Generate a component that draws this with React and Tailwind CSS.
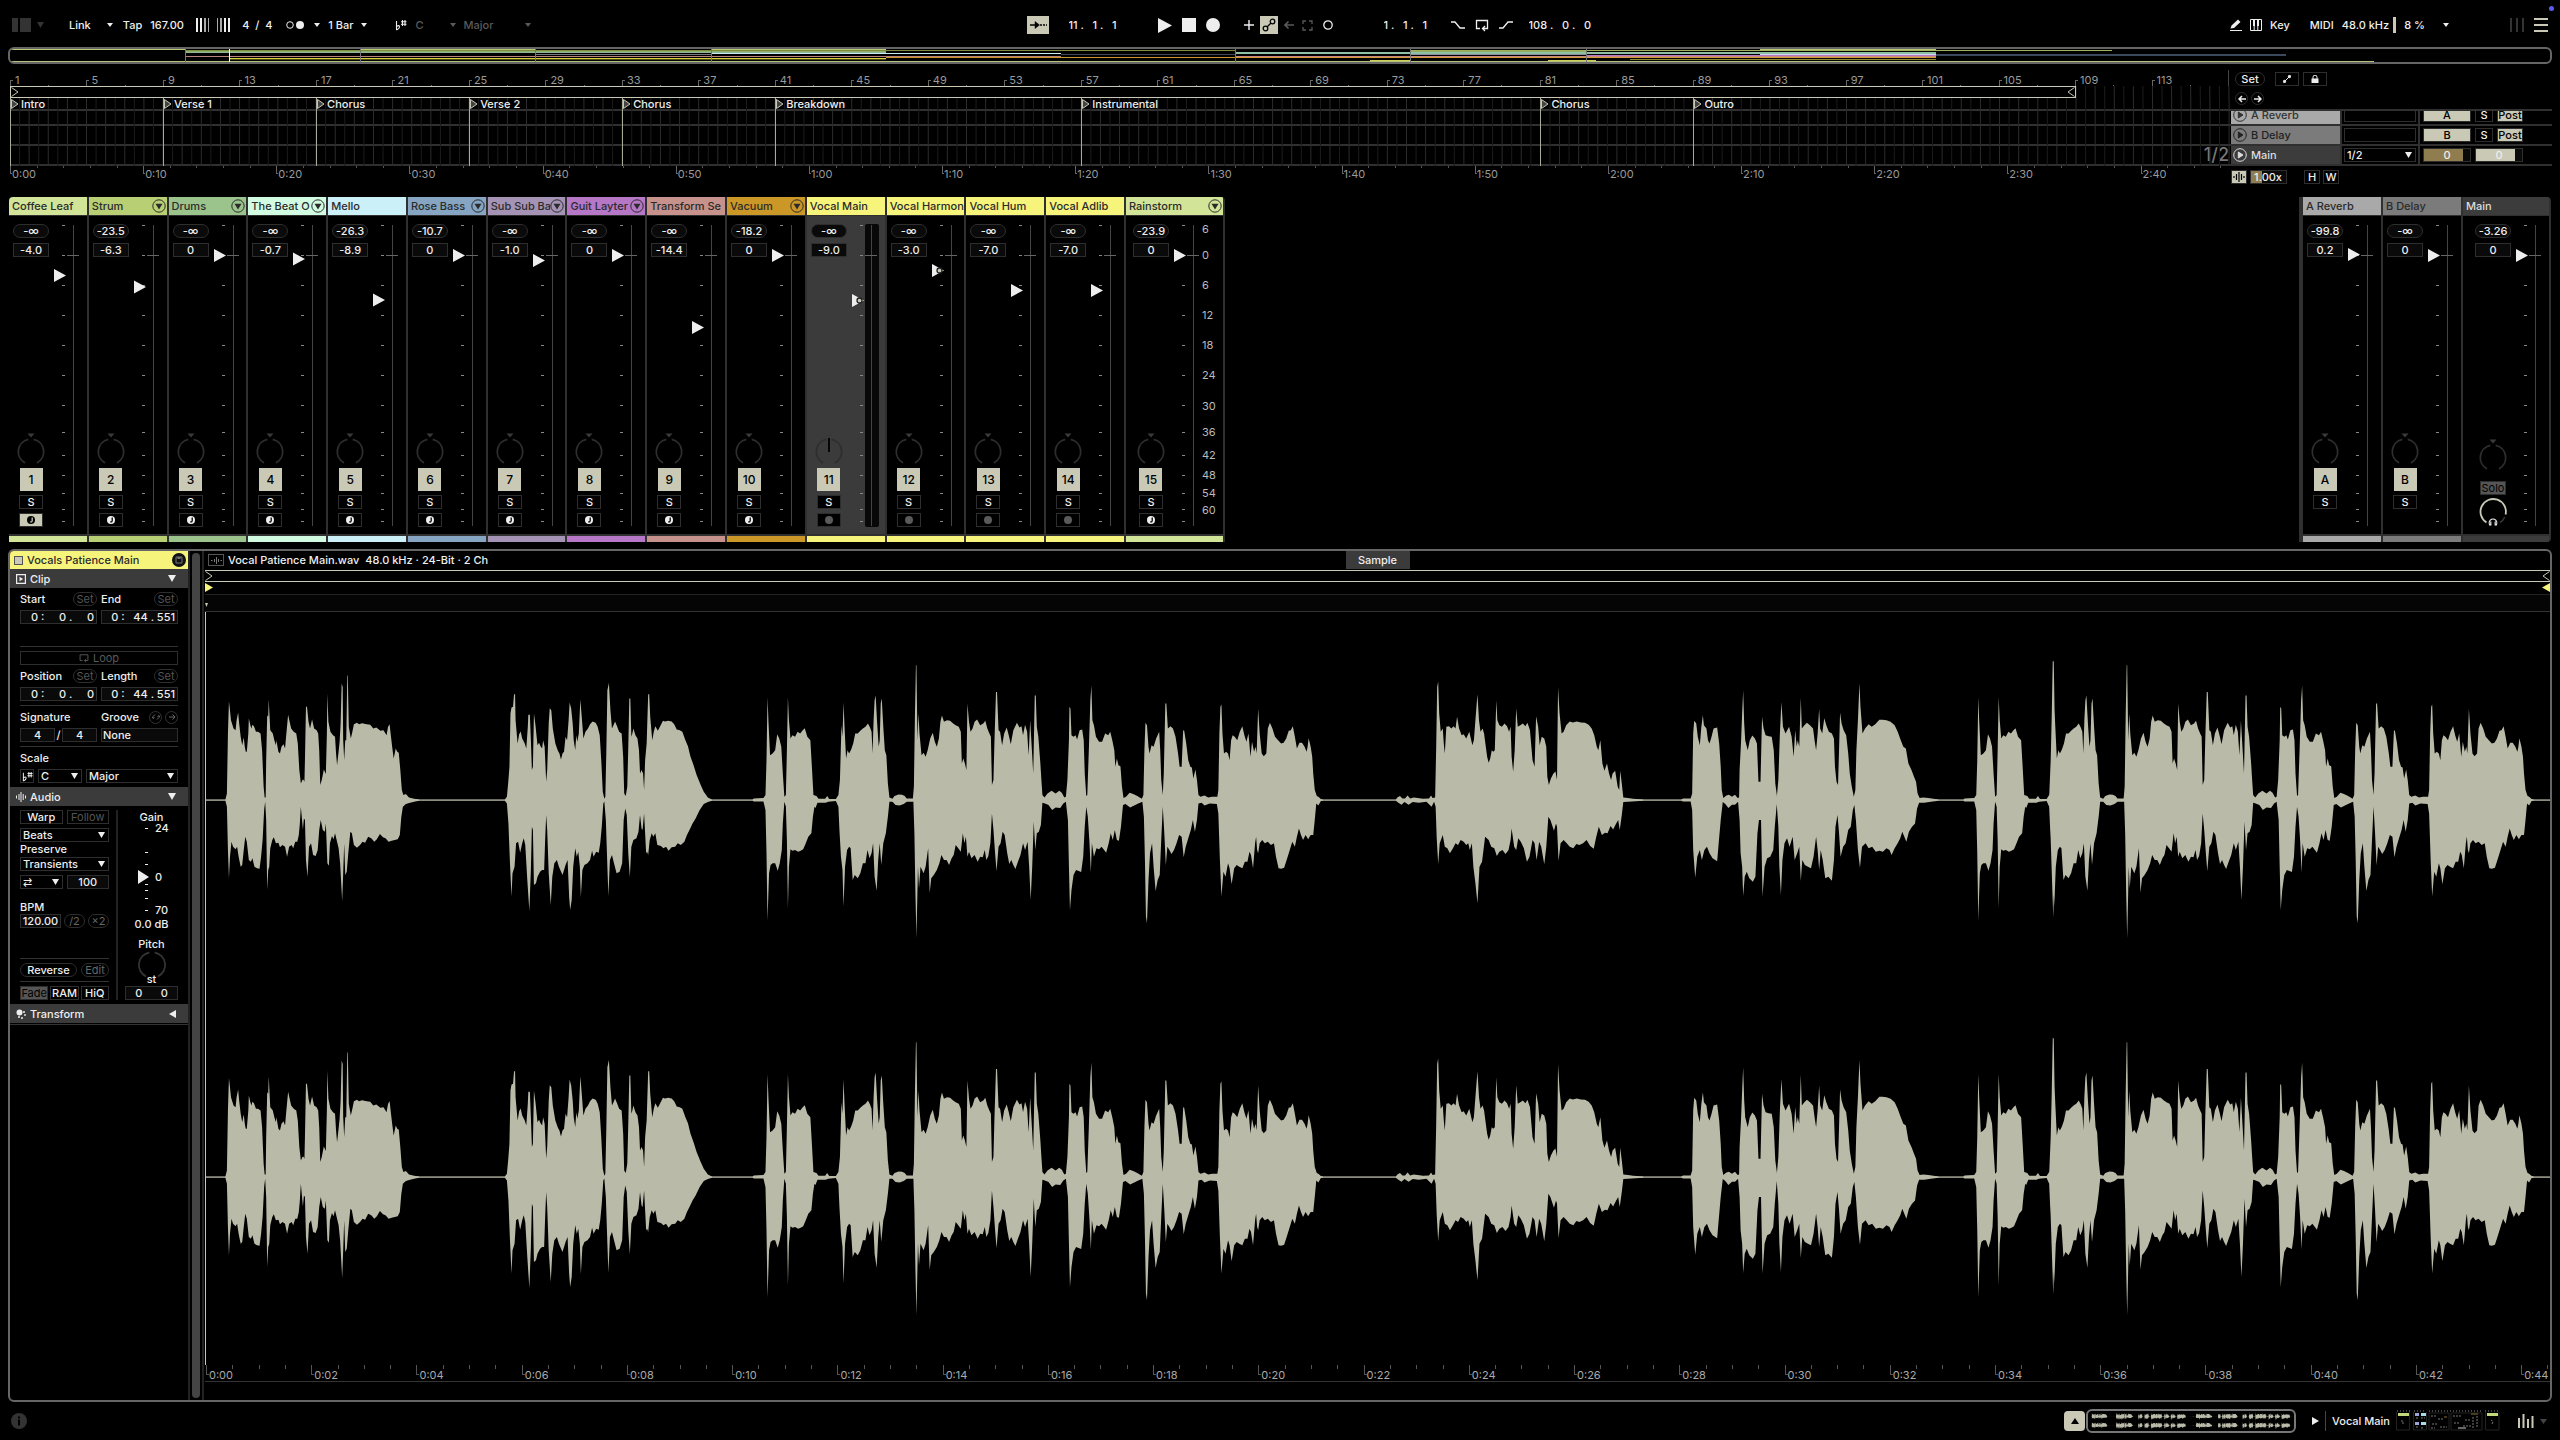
import { useId } from 'react'
import clsx from 'clsx'

const BARS = 116.1
const SECONDS = 166.8
const CLIP_SECONDS = 44.551

const BAR_MARKS = Array.from({ length: 29 }, (_, i) => 1 + i * 4)
const TIME_MARKS = Array.from({ length: 17 }, (_, i) => i * 10)
const CLIP_MARKS = Array.from({ length: 23 }, (_, i) => i * 2)

const LOCATORS = [
  { name: 'Intro', bar: 1 },
  { name: 'Verse 1', bar: 9 },
  { name: 'Chorus', bar: 17 },
  { name: 'Verse 2', bar: 25 },
  { name: 'Chorus', bar: 33 },
  { name: 'Breakdown', bar: 41 },
  { name: 'Instrumental', bar: 57 },
  { name: 'Chorus', bar: 81 },
  { name: 'Outro', bar: 89 },
]

const TRACKS = [
  { name: 'Coffee Leaf', color: 'bg-[#d2e498]', peak: '-∞', vol: '-4.0', midi: true, armed: true },
  { name: 'Strum', color: 'bg-[#b9cf74]', peak: '-23.5', vol: '-6.3', midi: true, group: true },
  { name: 'Drums', color: 'bg-[#9bc48d]', peak: '-∞', vol: '0', midi: true, group: true },
  { name: 'The Beat O', color: 'bg-[#d2fce1]', peak: '-∞', vol: '-0.7', midi: true, group: true },
  { name: 'Mello', color: 'bg-[#cbf0f8]', peak: '-26.3', vol: '-8.9', midi: true },
  { name: 'Rose Bass', color: 'bg-[#85a5c3]', peak: '-10.7', vol: '0', midi: true, group: true },
  { name: 'Sub Sub Ba', color: 'bg-[#a593b5]', peak: '-∞', vol: '-1.0', midi: true, group: true },
  { name: 'Guit Layter', color: 'bg-[#b677c6]', peak: '-∞', vol: '0', midi: true, group: true },
  { name: 'Transform Se', color: 'bg-[#c6928b]', peak: '-∞', vol: '-14.4', midi: true },
  { name: 'Vacuum', color: 'bg-[#cb9827]', peak: '-18.2', vol: '0', midi: true, group: true },
  { name: 'Vocal Main', color: 'bg-[#f7f47c]', peak: '-∞', vol: '-9.0', selected: true, automated: true },
  { name: 'Vocal Harmon', color: 'bg-[#f7f47c]', peak: '-∞', vol: '-3.0', automated: true },
  { name: 'Vocal Hum', color: 'bg-[#f7f47c]', peak: '-∞', vol: '-7.0' },
  { name: 'Vocal Adlib', color: 'bg-[#f7f47c]', peak: '-∞', vol: '-7.0' },
  { name: 'Rainstorm', color: 'bg-[#d2e498]', peak: '-23.9', vol: '0', midi: true, group: true, scale: true },
]

// y of every mark on the fader, from the top of the meter
const FADER_MARKS = [1, 31, 61, 91, 121, 151, 181, 208, 231, 251, 269, 285, 297]
const SCALE = [['6', 'mt-0'], ['0', 'mt-[14px]'], ['6', 'mt-[18px]'], ['12', 'mt-[18px]'], ['18', 'mt-[18px]'], ['24', 'mt-[18px]'], ['30', 'mt-[19px]'], ['36', 'mt-[14px]'], ['42', 'mt-[11px]'], ['48', 'mt-[8px]'], ['54', 'mt-[6px]'], ['60', 'mt-[5px]']]

// x,level pairs; x counts from `at`
const PHRASE = {
  top: '1122,2 1124,5 1143,6 1147,15 1149,120 1151,310 1153,230 1156,135 1161,140 1166,150 1170,198 1174,185 1178,160 1181,80 1184,10 1187,15 1189,150 1191,310 1193,240 1196,185 1200,195 1205,190 1210,205 1215,200 1220,210 1224,216 1229,190 1235,180 1238,100 1241,15 1247,12 1251,4 1264,4 1268,12 1272,3 1285,3 1290,15 1293,60 1296,225 1298,190 1300,293 1302,220 1305,125 1308,150 1311,140 1315,152 1319,170 1323,200 1328,200 1333,208 1338,215 1343,220 1348,230 1352,218 1355,205 1357,140 1359,240 1361,300 1363,314 1366,230 1369,160 1371,180 1373,290 1375,305 1378,220 1381,150 1384,135 1387,50 1390,8 1396,4 1400,12 1408,17 1415,16 1420,12 1424,5 1436,5 1438,40 1440,250 1442,405 1443,405 1445,180 1447,260 1449,200 1453,135 1457,142 1461,130 1465,150 1470,185 1475,202 1479,175 1483,160 1487,185 1490,235 1493,254 1497,235 1503,240 1509,238 1515,230 1520,225 1526,220 1530,205 1532,110 1535,125 1538,110 1541,90 1543,290 1546,235 1549,205 1553,215 1557,235 1562,242 1568,225',
  bottom: '1122,2 1124,4 1143,4 1147,30 1149,160 1151,362 1154,220 1157,195 1161,190 1166,190 1171,212 1175,190 1179,150 1181,70 1184,5 1187,20 1189,120 1191,325 1193,200 1196,148 1200,152 1205,150 1211,155 1216,152 1221,148 1226,130 1231,110 1237,100 1240,50 1243,20 1245,24 1249,8 1265,8 1270,5 1285,3 1290,20 1292,90 1295,170 1298,210 1300,320 1303,200 1307,150 1311,140 1314,145 1318,240 1322,225 1328,235 1333,220 1338,190 1343,190 1347,150 1351,175 1355,160 1358,130 1361,230 1365,272 1368,180 1371,130 1374,195 1378,130 1383,100 1387,50 1390,5 1396,5 1402,15 1410,16 1418,12 1424,5 1437,5 1439,100 1441,280 1443,415 1446,200 1448,265 1451,200 1457,220 1461,200 1466,145 1469,278 1472,235 1477,225 1483,210 1488,190 1492,165 1497,180 1502,180 1507,195 1512,175 1516,165 1520,135 1525,145 1530,155 1534,100 1537,130 1540,110 1543,170 1546,155 1551,175 1557,165 1563,185 1568,170',
}
const PHRASE_END = {
  top: '0,225 6,230 10,238 14,215 18,200 21,190 23,45 26,60 28,180 31,325 33,325 36,210 39,205 43,165 47,200 52,218 56,195 60,168 65,210 72,232 77,218 81,222 84,195 88,226 92,205 95,135 98,240 101,160 104,80 107,314 109,314 111,220 114,190 118,110 120,60 122,15 126,8 132,20 140,28 148,20 155,28 160,22 165,8 168,10 171,60 174,180 175,280 177,275 179,195 183,190 187,195 190,182 195,210 200,212 203,180 205,80 208,12 210,15 213,150 216,300 218,344 220,240 223,225 227,190 233,175 239,175 245,200 251,195 255,205 259,180 263,150 265,100 268,125 271,105 275,102 278,40 281,6 286,10 293,22 300,18 308,12 317,4 320,15 322,150 324,232 327,225 330,160 332,140 336,165 340,160 345,185 351,205 353,150 355,60 358,15 360,80 363,290 365,290 368,215 373,222 378,215 383,190 388,140 391,100 395,100 398,210 400,208 404,170 408,120 412,100 415,98 418,65 422,92 425,60 428,15 432,10 440,14 447,8 455,10 465,10 467,30 469,200 471,280 473,287 475,200 478,140 482,145 486,140 489,120 492,180 495,195 499,190 504,180 509,205 514,222 518,195 522,175 526,200 530,130 533,175 537,145 540,160 542,140 545,275 548,200 552,140 556,132 561,140 564,215 568,232 573,215 578,190 585,178 590,170 595,172 600,185 605,208 609,210 613,222 617,190 621,155 626,172 631,172 636,160 640,145 642,160 644,186 648,160 651,130 653,80 656,30 660,12 663,10 668,3 672,2',
  bottom: '0,170 5,172 9,150 12,180 16,168 20,130 23,40 26,90 29,155 32,214 36,140 40,130 44,95 48,105 53,160 57,192 61,180 65,195 69,207 74,185 79,165 84,130 88,150 93,125 96,200 99,300 102,200 105,65 108,150 111,100 115,95 119,75 122,8 127,10 134,15 141,30 148,22 157,24 163,10 168,5 172,60 174,200 176,330 179,270 183,225 188,210 193,213 198,216 202,170 205,80 208,20 211,50 214,120 217,218 219,130 223,170 228,145 233,148 238,140 243,150 247,158 252,130 256,100 260,120 264,90 268,120 272,122 276,80 280,15 285,12 294,22 302,16 310,10 318,5 321,50 323,180 325,350 327,370 330,240 333,160 337,130 340,200 344,273 348,240 352,225 355,120 358,20 361,100 364,196 367,140 371,150 375,162 380,150 385,130 390,105 395,110 399,172 403,140 408,115 413,90 417,60 421,95 425,60 428,10 434,8 440,16 450,10 464,12 467,40 470,180 473,290 477,215 481,230 486,190 489,205 493,253 498,205 503,195 508,200 514,205 519,185 524,185 528,155 531,165 535,205 539,130 541,110 543,150 545,160 548,130 553,120 558,130 564,125 570,135 576,130 580,170 585,205 590,206 596,203 602,175 607,150 612,125 617,140 621,110 625,85 629,105 633,120 638,105 643,118 648,105 653,105 656,60 659,10 663,16 668,3 672,2',
}
const WAVE = [
  {
    at: -50,
    top: '88,2 91,20 93,200 95,297 97,270 99,240 104,215 108,210 110,240 113,263 115,230 118,190 121,165 124,188 126,160 128,145 130,145 133,200 134,245 137,225 139,215 141,226 144,222 148,205 152,205 157,200 160,150 163,40 165,8 167,8 168,120 170,255 172,250 173,303 176,210 181,200 184,180 187,165 188,180 192,145 195,140 198,160 202,168 205,155 207,190 211,256 214,235 217,215 222,205 227,200 230,170 233,90 236,50 239,60 241,62 243,55 244,120 246,280 248,280 251,235 254,215 258,242 262,215 267,210 270,200 272,150 274,45 277,60 281,92 283,85 285,78 287,200 288,320 290,235 294,205 299,195 303,190 305,140 307,105 310,145 312,175 314,230 316,350 318,340 319,180 321,120 323,180 325,180 327,374 328,374 330,220 334,185 337,205 340,228 346,232 350,228 356,231 365,228 372,226 378,215 384,218 392,208 398,210 404,195 407,220 410,228 412,200 415,160 418,125 422,155 425,145 428,142 431,90 434,30 437,15 442,18 448,8 458,4 468,2',
    bottom: '88,2 91,20 93,150 95,235 97,170 100,125 103,140 108,148 111,140 114,170 118,200 121,195 124,150 127,110 130,125 134,180 138,185 141,175 145,200 150,205 155,206 158,170 161,120 164,30 166,5 168,60 170,270 172,210 174,200 176,145 180,120 183,112 187,130 192,128 195,142 200,135 205,140 209,170 213,140 218,135 221,145 225,125 229,125 232,105 234,70 236,20 240,88 242,55 244,60 246,180 249,230 252,140 256,130 260,165 265,168 269,150 272,90 275,60 279,90 283,95 285,70 288,190 291,197 293,130 297,108 300,118 303,100 307,125 310,145 313,190 317,303 319,220 321,130 323,225 326,215 329,160 333,95 336,100 340,135 346,143 352,135 357,125 362,128 368,110 374,115 380,125 385,118 391,102 397,112 402,115 408,125 414,122 420,120 426,118 430,105 433,50 436,20 442,12 450,8 460,4 468,2',
  },
  {
    at: -50,
    top: '636,2 640,10 643,60 645,100 647,260 649,278 652,280 654,318 656,318 657,240 661,170 664,198 667,206 670,185 675,170 678,155 681,220 682,256 685,256 687,180 689,90 691,100 693,260 696,225 700,165 703,172 706,162 709,155 711,180 714,160 717,55 719,90 722,230 724,276 727,270 730,215 735,170 740,148 743,140 746,122 749,140 752,145 755,190 758,180 761,240 763,293 766,275 769,230 771,180 774,150 776,195 778,175 781,200 784,303 787,245 790,185 794,205 799,215 803,228 808,236 814,232 818,220 822,195 825,120 828,25 831,4 833,10 835,150 837,330 840,352 843,270 846,215 849,225 852,236 856,222 860,205 865,200 868,130 870,20 873,12 876,40 878,160 880,305 882,305 884,190 886,200 888,215 892,195 896,185 899,150 901,80 904,90 907,80 909,30 911,120 914,170 917,318 919,318 921,250 925,180 928,205 931,222 936,208 940,220 946,238 950,236 956,238 963,236 968,228 973,212 979,210 984,205 990,180 995,162 1000,130 1006,105 1012,75 1020,45 1026,25 1034,8 1042,2',
    bottom: '636,2 640,10 643,70 646,190 649,290 651,220 655,200 658,130 662,125 666,158 670,130 673,115 676,135 680,240 684,333 687,210 689,80 691,90 693,255 697,250 700,230 705,215 709,210 713,210 715,120 717,45 719,90 722,220 726,315 729,230 733,190 738,180 742,200 749,225 755,195 759,180 762,290 764,330 767,300 770,200 774,145 777,170 780,155 783,200 785,292 788,210 792,195 798,190 803,180 807,152 810,170 815,155 820,158 823,130 826,80 829,10 831,4 834,60 837,200 839,288 842,180 846,165 850,190 855,220 861,215 866,190 869,60 872,25 875,45 878,160 881,232 884,140 888,120 894,115 898,95 901,45 904,85 906,90 909,40 911,100 913,160 915,155 917,165 920,120 924,100 927,110 931,100 935,135 942,138 947,145 952,140 957,152 963,142 970,140 975,130 981,135 988,125 993,105 998,90 1004,70 1010,55 1018,30 1026,12 1034,6 1042,2',
  },
  { at: -50, ...PHRASE },
  { at: 1518, ...PHRASE_END },
  {
    at: 1518,
    top: '815,2 818,8 823,12 828,5 833,5 838,14 843,5 850,8 858,6 868,4 880,5 884,14 887,6 892,8 894,150 896,340 898,356 900,260 903,205 907,215 909,170 911,140 914,220 919,222 924,215 928,222 932,215 935,250 939,215 944,195 948,198 953,185 959,205 962,185 965,165 968,180 971,240 975,318 978,240 981,205 985,215 988,200 991,165 994,130 997,112 1000,125 1003,150 1006,145 1009,150 1012,300 1014,240 1018,225 1023,220 1028,230 1033,222 1037,205 1040,220 1042,130 1045,85 1048,150 1051,276 1054,220 1059,225 1064,230 1069,222 1073,232 1078,210 1083,120 1087,100 1090,252 1094,220 1097,165 1101,190 1106,185 1110,160 1112,70 1115,45 1119,65 1124,80 1128,86 1131,60 1133,340 1136,260 1140,200 1144,205 1149,225 1156,236 1162,233 1170,236 1178,233 1186,232 1193,226 1199,215 1204,195 1209,160 1212,150 1216,180 1220,110 1224,88 1229,110 1233,80 1237,60 1240,80 1245,88 1250,40 1253,30 1255,88 1258,50 1261,8 1270,6 1280,4 1300,2',
    bottom: '815,2 820,8 826,14 832,6 840,14 848,6 860,8 875,5 885,20 890,5 893,20 895,110 898,193 901,130 907,105 911,140 916,145 921,160 927,145 932,130 937,135 942,120 948,125 953,135 957,130 960,150 964,130 967,200 971,250 975,310 979,200 984,185 990,110 997,120 1002,140 1008,145 1013,168 1018,155 1024,150 1030,162 1036,150 1040,120 1042,85 1047,140 1051,150 1055,115 1060,125 1066,145 1072,185 1077,170 1083,120 1087,130 1091,180 1096,125 1100,140 1106,193 1110,140 1114,50 1118,60 1125,92 1129,70 1131,80 1134,183 1138,130 1144,120 1150,130 1156,140 1163,145 1169,132 1175,135 1182,130 1189,120 1196,138 1203,146 1208,110 1213,80 1219,105 1225,98 1230,100 1236,78 1241,88 1247,70 1251,60 1254,90 1258,45 1261,6 1270,5 1300,2',
  },
  {
    at: 1518,
    top: '1375,2 1378,5 1393,5 1396,20 1398,200 1400,238 1404,230 1407,190 1411,165 1414,220 1417,255 1419,225 1424,215 1427,180 1430,170 1434,190 1438,215 1445,218 1449,170 1452,100 1454,30 1457,6 1463,14 1468,16 1474,10 1480,16 1485,6 1488,8 1489,90 1492,180 1494,260 1496,330 1498,230 1500,180 1505,150 1509,180 1514,194 1519,185 1523,170 1526,55 1530,55 1533,250 1536,215 1540,195 1546,192 1552,190 1556,150 1559,50 1562,15',
    bottom: '1375,2 1378,4 1393,4 1396,30 1398,150 1402,233 1406,170 1411,150 1415,180 1420,150 1425,140 1430,160 1436,175 1445,184 1448,130 1452,60 1456,6 1461,12 1467,24 1474,14 1480,14 1486,5 1489,60 1491,160 1494,200 1496,288 1499,230 1503,215 1508,235 1515,245 1520,230 1524,100 1527,60 1531,60 1534,290 1538,200 1543,175 1549,170 1555,150 1558,80 1562,10',
  },
  {
    at: 3047,
    top: '33,10 36,60 39,200 42,295 45,220 50,200 57,220 62,190 66,130 69,210 72,160 74,180 77,160 80,308 82,215 87,225 92,232 98,225 104,215 107,180 110,150 113,200 116,275 118,215 122,200 126,246 130,225 135,205 141,200 145,185 147,100 150,55 153,45 155,150 157,263 160,230 164,210 169,195 173,140 176,80 180,40 184,10 187,30 189,150 192,240 195,352 197,280 201,200 206,215 213,228 219,220 226,228 234,241 240,241 248,240 256,235 264,225 270,205 276,180 281,160 286,155 291,110 297,90 302,70 306,55 309,20 313,6 320,8 330,6 340,4 350,2',
    bottom: '33,15 36,80 38,200 41,285 44,180 48,130 53,115 58,140 64,110 68,180 73,160 77,140 80,243 83,180 88,195 94,200 100,205 105,170 110,110 113,150 116,210 119,150 123,180 128,235 134,230 141,242 145,180 148,80 152,45 155,100 158,170 163,140 168,130 173,90 178,80 182,30 185,15 188,60 192,150 196,203 200,140 207,130 213,145 220,140 227,155 234,152 241,155 248,145 254,150 258,165 264,145 270,130 275,115 279,95 283,110 287,125 292,95 298,80 304,70 308,25 312,8 322,8 335,5 350,2',
  },
  { at: 2324, ...PHRASE },
  { at: 3047, top: '567,10 570,120 572,250 574,417 576,417 578,230 582,125', bottom: '567,10 570,120 575,353 578,200 582,125' },
  { at: 3892, ...PHRASE_END },
]

const outline = ({ at, top, bottom }) => {
  const pts = (s, sign) => s.split(' ').map((p) => p.split(',').map(Number)).map(([x, v]) => `${x + at},${v * sign}`)
  return `M${pts(top, -1).join('L')}L${pts(bottom, 1).reverse().join('L')}Z`
}
const WAVE_PATH = WAVE.map(outline).join('')

// x, y, width, colour of each stripe in the arrangement overview
const OVERVIEW = [
  [0, 0, 175, '#b9cb72'], [350, 0, 175, '#b9cb72'], [701, 0, 175, '#b9cb72'], [1750, 0, 176, '#b9cb72'],
  [175, 1, 1050, '#7f8c3c'], [1400, 1, 702, '#9fb055'],
  [175, 2, 701, '#8fae6a'], [1400, 2, 176, '#8fae6a'],
  [175, 3, 701, '#8fb59a'], [1225, 3, 701, '#8fc0a6'], [1225, 4, 701, '#8fc0a6'], [701, 4, 350, '#c8ecf2'],
  [525, 5, 176, '#77777f'], [1051, 5, 174, '#3a4a5c'], [1400, 5, 176, '#8d8da0'], [1750, 5, 176, '#cbd8ee'], [1926, 5, 350, '#3a4a5c'],
  [1576, 6, 350, '#b677c6'], [1926, 6, 350, '#3a4a5c'],
  [175, 7, 876, '#b8847c'], [1225, 7, 701, '#c98a84'], [1225, 8, 701, '#d39a3a'],
  [876, 8, 349, '#cb9827'], [220, 9, 656, '#d5d33c'], [220, 10, 656, '#4c4a12'],
  [1360, 11, 40, '#cfcd56'], [1538, 11, 48, '#cfcd56'], [1620, 10, 306, '#8f8d3a'],
  [0, 12, 2364, '#b4c37a'],
]

function Tri({ dir = 'down', className = 'size-2' }) {
  const d = { down: 'M0 0H8L4 8Z', up: 'M4 0L8 8H0Z', left: 'M8 0V8L0 4Z', right: 'M0 0L8 4L0 8Z' }[dir]
  return (
    <svg viewBox="0 0 8 8" preserveAspectRatio="none" className={clsx('shrink-0 fill-current', className)}>
      <path d={d} />
    </svg>
  )
}

function Waveform({ view = '0 -565 4596 1131' }) {
  return (
    <span className="relative min-h-0 flex-1">
      <svg viewBox={view} preserveAspectRatio="none" className="absolute inset-0 size-full fill-[#babaa8]">
        <path d={WAVE_PATH} />
        <rect x="0" y="-2" width="4596" height="4" />
      </svg>
    </span>
  )
}

function Box({ tone = 'bg-black', className, children, ...rest }) {
  return (
    <button className={clsx('flex h-3.5 items-center justify-center border border-[#2e2e2e] leading-none', tone, className)} {...rest}>
      {children}
    </button>
  )
}

function Pill({ className, children }) {
  return (
    <button className={clsx('flex h-3.5 items-center justify-center rounded-full border border-[#2e2e2e] px-1 leading-none', className)}>{children}</button>
  )
}

function Field({ label, value, className, id }) {
  return (
    <input
      id={id}
      aria-label={id ? undefined : label}
      defaultValue={value}
      className={clsx('h-3.5 min-w-0 border border-[#2e2e2e] bg-[#0a0a0a] leading-none outline-none', className)}
    />
  )
}

function Dropdown({ label, value, className, id }) {
  return (
    <span className={clsx('relative flex', className)}>
      <select id={id} aria-label={id ? undefined : label} className="h-3.5 w-full appearance-none border border-[#2e2e2e] bg-black pl-0.5 leading-none outline-none">
        <option>{value}</option>
      </select>
      <Tri className="pointer-events-none absolute top-1 right-1 h-1.5 w-[7px]" />
    </span>
  )
}

function ScaleGlyph({ className }) {
  return (
    <svg viewBox="0 0 12 12" className={clsx('size-3 shrink-0 fill-none stroke-current', className)}>
      <path d="M1.5 2V11M1.5 7.5Q4.5 5.5 4.5 8Q4.5 9.5 1.5 11M7.5 1V7M10 1V7M6 2.8H11.5M6 5.2H11.5" strokeWidth="1.1" />
    </svg>
  )
}

function LoopGlyph({ className }) {
  return (
    <svg viewBox="0 0 14 14" className={clsx('shrink-0 fill-none stroke-current', className)}>
      <path d="M5 10.5H1.5V2.5H12.5V10.5H8M10 8L7.5 10.5L10 13" strokeWidth="1.3" />
    </svg>
  )
}

function TopBar() {
  return (
    <header className="flex h-[47px] items-center pt-[3px]">
      <div className="flex flex-1 items-center">
        <button aria-label="Browser" className="ml-1 flex gap-0.5">
          <span className="h-3.5 w-1.5 bg-[#333]" />
          <span className="h-3.5 w-[11px] bg-[#333]" />
        </button>
        <Tri className="ml-1.5 h-1.5 w-[7px] text-[#333]" />
        <button className="ml-[25px]">Link</button>
        <Tri className="ml-4 h-1 w-1.5" />
        <button className="ml-2.5">Tap</button>
        <input aria-label="Tempo" defaultValue="167.00" className="ml-2 w-10 outline-none" />
        <button aria-label="Nudge down" className="ml-1.5 flex gap-0.5">
          <span className="h-3.5 w-0.5 bg-[#eee]" />
          <span className="h-3.5 w-0.5 bg-[#eee]" />
          <span className="h-3.5 w-0.5 bg-[#aaa]" />
          <span className="h-3.5 w-px bg-[#aaa]" />
        </button>
        <button aria-label="Nudge up" className="ml-2 flex gap-0.5">
          <span className="h-3.5 w-px bg-[#aaa]" />
          <span className="h-3.5 w-0.5 bg-[#aaa]" />
          <span className="h-3.5 w-0.5 bg-[#eee]" />
          <span className="h-3.5 w-0.5 bg-[#eee]" />
        </button>
        <input aria-label="Time signature" defaultValue="4  /  4" className="ml-3 w-9 outline-none" />
        <svg viewBox="0 0 18 8" className="ml-2 h-2 w-[18px]">
          <circle cx="4" cy="4" r="3.3" className="fill-none stroke-[#eee]" />
          <circle cx="14" cy="4" r="4" className="fill-[#eee]" />
        </svg>
        <Tri className="ml-2.5 h-1 w-1.5" />
        <button className="ml-2">1 Bar</button>
        <Tri className="ml-2 h-1 w-1.5" />
        <ScaleGlyph className="ml-7" />
        <button className="ml-2 text-[#5a5a5a]">C</button>
        <Tri className="ml-[26px] h-1 w-1.5 text-[#5a5a5a]" />
        <button className="ml-2 text-[#5a5a5a]">Major</button>
        <Tri className="ml-8 h-1 w-1.5 text-[#5a5a5a]" />
      </div>

      <div className="flex shrink-0 items-center pl-[69px]">
        <button aria-label="Follow" className="flex h-[18px] w-[22px] items-center justify-center bg-[#c9c9b6]">
          <svg viewBox="0 0 18 8" className="h-2 w-[18px] stroke-black">
            <path d="M1 4H7" strokeWidth="1.5" />
            <path d="M6 0.5L10.5 4L6 7.5Z" className="fill-black" strokeWidth="0.5" />
            <path d="M11 4H18" strokeDasharray="2 1" strokeWidth="1.5" />
          </svg>
        </button>
        <input aria-label="Position" defaultValue="11 .   1 .   1" className="ml-5 w-[73px] outline-none" />
        <button aria-label="Play" className="ml-4"><Tri dir="right" className="h-[15px] w-3.5" /></button>
        <button aria-label="Stop" className="ml-2.5 size-3.5 bg-[#eee]" />
        <button aria-label="Record" className="ml-2.5 size-3.5 rounded-full bg-[#eee]" />
        <svg viewBox="0 0 10 10" className="ml-6 size-2.5 stroke-[#eee]"><path d="M5 0V10M0 5H10" strokeWidth="1.4" /></svg>
        <button aria-label="Automation arm" className="ml-1.5 flex h-[18px] w-[18px] items-center justify-center bg-[#c9c9b6]">
          <svg viewBox="0 0 14 14" className="size-3.5 fill-none stroke-black" strokeWidth="1.3">
            <circle cx="3.5" cy="10.5" r="2.3" />
            <circle cx="10.5" cy="3.5" r="2.3" />
            <path d="M5 9L9 5" />
          </svg>
        </button>
        <svg viewBox="0 0 10 10" className="ml-1.5 size-2.5 fill-none stroke-[#5a5a5a]"><path d="M10 5H1.5M4.5 1.5L1 5L4.5 8.5" strokeWidth="1.6" /></svg>
        <svg viewBox="0 0 11 11" className="ml-2 size-[11px] fill-none stroke-[#5a5a5a]"><path d="M1 4V1H4M7 1H10V4M10 7V10H7M4 10H1V7" strokeWidth="1.3" /></svg>
        <svg viewBox="0 0 10 10" className="ml-2.5 size-2.5 fill-none stroke-[#eee]"><circle cx="5" cy="5" r="4.2" strokeWidth="1.3" /></svg>
        <input aria-label="Loop start" defaultValue="1 .   1 .   1" className="ml-[51px] w-[61px] outline-none" />
        <svg viewBox="0 0 14 8" className="ml-1.5 h-2 w-3.5 fill-none stroke-[#eee]"><path d="M0 1H4L9 7H14" strokeWidth="1.3" /></svg>
        <button aria-label="Loop" className="ml-2.5"><LoopGlyph className="size-3.5" /></button>
        <svg viewBox="0 0 14 8" className="ml-2.5 h-2 w-3.5 fill-none stroke-[#eee]"><path d="M0 7H4L9 1H14" strokeWidth="1.3" /></svg>
        <input aria-label="Loop length" defaultValue="108 .   0 .   0" className="ml-4 w-[74px] outline-none" />
      </div>

      <div className="flex flex-1 items-center justify-end">
        <svg viewBox="0 0 12 12" className="size-3 fill-[#eee]"><path d="M0.5 9.5L1.5 6.5L8 0.5L10.5 3L4 9ZM0 11H12V12H0Z" /></svg>
        <svg viewBox="0 0 12 12" className="ml-2 size-3">
          <path d="M0.5 0.5H11.5V11.5H0.5ZM4.2 6V11.5M7.8 6V11.5" className="fill-none stroke-[#eee]" />
          <path d="M3 0.5H5V7H3ZM7 0.5H9V7H7Z" className="fill-[#eee]" />
        </svg>
        <button className="ml-2">Key</button>
        <span className="ml-5">MIDI</span>
        <span className="ml-2">48.0 kHz</span>
        <span className="ml-1 h-4 w-[3px] bg-[#c9c9b6]" />
        <span className="ml-2">8 %</span>
        <Tri className="ml-[18px] h-1 w-1.5" />
        <div className="ml-[61px] flex gap-1">
          <span className="h-3.5 w-0.5 bg-[#333]" />
          <span className="h-3.5 w-0.5 bg-[#333]" />
          <span className="h-3.5 w-0.5 bg-[#333]" />
        </div>
        <button aria-label="Views" className="mr-1 ml-2.5 flex flex-col gap-1">
          <span className="h-0.5 w-3.5 bg-[#c9c9b6]" />
          <span className="h-0.5 w-3.5 bg-[#c9c9b6]" />
          <span className="h-0.5 w-3.5 bg-[#c9c9b6]" />
        </button>
      </div>
      <span className="absolute top-1.5 right-1.5 size-[5px] rounded-full bg-[#5b5bf0]" />
    </header>
  )
}

function Overview() {
  return (
    <div className="h-[17px] overflow-hidden rounded-md border-2 border-[#666]">
      <svg viewBox="0 0 2540 13" preserveAspectRatio="none" className="block size-full">
        {OVERVIEW.map(([x, y, w, c], i) => (
          <rect key={i} x={x} y={y} width={w} height="1" fill={c} />
        ))}
        {[175, 350, 525, 701, 1225, 1400, 1576].map((x) => (
          <rect key={x} x={x} y="0" width="1" height="13" fill="#777" />
        ))}
        <rect x="219" y="0" width="1" height="13" fill="#fff" />
      </svg>
    </div>
  )
}

function Grid({ from = 0 }) {
  const lines = Array.from({ length: Math.floor((BARS - from) * 2) + 1 }, (_, i) => i)
  return (
    <svg className="absolute inset-0 size-full" preserveAspectRatio="none">
      {lines.map((i) => {
        const x = `${(i / 2 / (BARS - from)) * 100}%`
        return <line key={i} x1={x} x2={x} y1="0" y2="100%" stroke={i % 2 ? '#1c1c1c' : '#2c2c2c'} />
      })}
    </svg>
  )
}

function Timeline() {
  return (
    <div className="min-w-0 flex-1 pl-0.5">
      <div className="flex h-4 overflow-hidden">
        {BAR_MARKS.map((bar) => (
          <div key={bar} className="relative flex min-w-0 basis-0 items-end gap-0.5" style={{ flexGrow: Math.min(4, BARS - bar + 1) }}>
            <span className="h-1.5 w-[3px] shrink-0 border-t border-l border-[#666]" />
            <span className="leading-3 font-normal text-[#9a9a9a]">{bar}</span>
            <span className="absolute bottom-0 left-1/2 h-px w-px bg-[#666]" />
          </div>
        ))}
        <span className="basis-0 border-l border-[#444]" style={{ flexGrow: 0.1 }} />
      </div>

      <div className="flex h-3">
        <div className="flex basis-0 items-center justify-between border border-[#c9c9b6]" style={{ flexGrow: 108 }}>
          <svg viewBox="0 0 8 10" className="h-2.5 w-2 fill-none stroke-[#c9c9b6]"><path d="M0.5 0.5L7 5L0.5 9.5" /></svg>
          <svg viewBox="0 0 8 10" className="h-2.5 w-2 fill-none stroke-[#c9c9b6]"><path d="M7.5 0.5L1 5L7.5 9.5" /></svg>
        </div>
        <div className="relative basis-0" style={{ flexGrow: BARS - 108 }}><Grid from={108} /></div>
      </div>

      <div className="relative">
        <Grid />
        <div className="h-[13px] border-b-2 border-[#303030]" />
        <div className="h-[15px] border-b-2 border-[#303030]" />
        <div className="h-5 border-b-2 border-[#303030]" />
        <div className="flex h-5 items-center justify-end border-b-2 border-[#303030] pr-0.5 text-lg leading-none text-[#777]">1/2</div>
        <div className="absolute inset-0 flex">
          {LOCATORS.map((loc, i) => (
            <div
              key={loc.bar}
              className="min-w-0 basis-0"
              style={{ flexGrow: (LOCATORS[i + 1]?.bar ?? BARS + 1) - loc.bar }}
            >
              <div className="flex h-full items-start gap-0.5 border-l border-[#a9a997]">
                <svg viewBox="0 0 8 10" className="mt-px h-2.5 w-2 fill-[#444] stroke-[#c9c9b6]"><path d="M0.5 0.5L7 5L0.5 9.5Z" /></svg>
                <span className="leading-3">{loc.name}</span>
              </div>
            </div>
          ))}
        </div>
      </div>

      <div className="flex h-[26px]">
        {TIME_MARKS.map((s) => (
          <div key={s} className="relative flex min-w-0 basis-0 items-start" style={{ flexGrow: Math.min(10, SECONDS - s) }}>
            <span className="h-2 w-0.5 shrink-0 border-b border-l border-[#666]" />
            <span className="pt-0.5 leading-3 font-normal text-[#9a9a9a]">
              {Math.floor(s / 60)}:{String(s % 60).padStart(2, '0')}
            </span>
            {[2, 4, 6, 8].filter((m) => s + m < SECONDS).map((m) => (
              <span key={m} className="absolute top-0 h-0.5 w-px bg-[#555]" style={{ left: `${(m / Math.min(10, SECONDS - s)) * 100}%` }} />
            ))}
          </div>
        ))}
      </div>
    </div>
  )
}

function LaneHeader({ name, color, routing, children, height = 'h-5' }) {
  return (
    <div className={clsx('flex items-end overflow-hidden border-b-2 border-[#303030]', height)}>
      <div className={clsx('flex h-[18px] w-[109px] shrink-0 items-center gap-1 pl-0.5', color)}>
        <svg viewBox="0 0 14 14" className="size-3.5 fill-none stroke-current">
          <circle cx="7" cy="7" r="6.3" strokeWidth="1" />
          <path d="M5.3 4L10 7L5.3 10Z" className="fill-current" />
        </svg>
        {name}
      </div>
      <div className="flex h-[18px] w-20 shrink-0 items-center border-x-2 border-[#303030] px-0.5">
        {routing ? <Dropdown label="Main output" value={routing} className="w-full" /> : <Box aria-label={`${name} output`} className="w-full" />}
      </div>
      <div className="flex h-[18px] items-center gap-1 pl-[3px]">{children}</div>
    </div>
  )
}

function LaneHeaders() {
  return (
    <div className="w-[321px] shrink-0">
      <div className="flex h-[41px] flex-col gap-1.5 border-b-2 border-[#303030] pt-0.5 pl-1">
        <div className="flex items-center gap-1">
          <Pill className="mr-1.5 w-[30px]">Set</Pill>
          <Box aria-label="Automation mode" className="w-6">
            <svg viewBox="0 0 8 8" className="size-2 fill-[#eee] stroke-[#eee]"><circle cx="1.5" cy="6.5" r="1.2" /><circle cx="6.5" cy="1.5" r="1.2" /><path d="M1.5 6.5L6.5 1.5" /></svg>
          </Box>
          <Box aria-label="Lock envelopes" className="w-6">
            <svg viewBox="0 0 8 8" className="size-2 fill-[#eee]"><path d="M0.5 3.5H7.5V8H0.5Z" /><path d="M2 4V2.2A2 2 0 0 1 6 2.2V4" className="fill-none stroke-[#eee]" /></svg>
          </Box>
        </div>
        <div className="flex gap-[3px]">
          <button aria-label="Previous locator" className="flex size-[13px] items-center justify-center rounded-full border border-[#2e2e2e]">
            <svg viewBox="0 0 8 8" className="size-2 fill-none stroke-[#eee]"><path d="M8 4H1M4 1L1 4L4 7" strokeWidth="1.5" /></svg>
          </button>
          <button aria-label="Next locator" className="flex size-[13px] items-center justify-center rounded-full border border-[#2e2e2e]">
            <svg viewBox="0 0 8 8" className="size-2 fill-none stroke-[#eee]"><path d="M0 4H7M4 1L7 4L4 7" strokeWidth="1.5" /></svg>
          </button>
        </div>
      </div>
      <LaneHeader name="A Reverb" color="bg-[#a9a9a9] text-[#333]" height="h-[15px]">
        <Box tone="bg-[#c9c9b6] text-black" className="w-12">A</Box>
        <Box className="w-[18px]">S</Box>
        <Box tone="bg-[#c9c9b6] text-black" className="w-[26px]">Post</Box>
      </LaneHeader>
      <LaneHeader name="B Delay" color="bg-[#7b7b7b] text-[#222]">
        <Box tone="bg-[#c9c9b6] text-black" className="w-12">B</Box>
        <Box className="w-[18px]">S</Box>
        <Box tone="bg-[#c9c9b6] text-black" className="w-[26px]">Post</Box>
      </LaneHeader>
      <LaneHeader name="Main" color="bg-[#3c3c3c] text-[#ddd]" routing="1/2">
        <Field label="Main volume" value="0" className="w-12 bg-linear-to-r from-[#8f7d50] from-84% to-[#0a0a0a] to-84% text-center" />
        <Field label="Main pan" value="0" className="w-12 bg-linear-to-r from-[#c9c9b6] from-84% to-[#0a0a0a] to-84% text-center" />
      </LaneHeader>
      <div className="flex h-[26px] items-start gap-[3px] pt-1">
        <Box aria-label="Waveform zoom" tone="bg-[#c9c9b6]" className="w-4">
          <svg viewBox="0 0 12 10" className="h-2.5 w-3 stroke-black"><path d="M1 4V6M3.5 2V8M6 0V10M8.5 2V8M11 4V6" strokeWidth="1.2" /></svg>
        </Box>
        <Field label="Vertical zoom" value="1.00x" className="w-[37px] bg-linear-to-r from-[#8f7d50] from-32% to-[#0a0a0a] to-32% pr-1 text-right" />
        <Box className="ml-3.5 w-4">H</Box>
        <Box className="w-4">W</Box>
      </div>
    </div>
  )
}

function Knob({ label, line, className }) {
  return (
    <span className={clsx('relative flex', className)}>
      <svg viewBox="0 0 30 34" className="h-[34px] w-[30px] fill-none stroke-[#2e2e2e]" strokeWidth="1.8">
        <path d="M12.3 6.3A12.7 12.7 0 0 0 9 29.9M17.7 6.3A12.7 12.7 0 0 1 21 29.9" />
        <path d="M11.5 0.5H18.5L15 4.5Z" stroke="none" className="fill-[#3a3a3a]" />
        {line && <path d="M15 5V19" stroke="#000" />}
      </svg>
      <input type="range" aria-label={label} className="absolute inset-0 size-full opacity-0" />
    </span>
  )
}

function Fader({ track }) {
  const y = 31 - parseFloat(track.vol) * 5
  return (
    <span className="relative mt-2 ml-1 flex h-[303px] w-7 shrink-0">
      <svg viewBox="0 0 28 303" className="h-[303px] w-7">
        {track.selected && <rect x="14" y="0" width="14" height="303" rx="2" fill="#080808" />}
        {FADER_MARKS.map((m) => (
          <rect key={m} x="9" y={m} width="3" height="1" fill="#888" />
        ))}
        <rect x="20" y="1" width="1" height="301" fill="#444" />
        <rect x="14" y="31" width="12" height="1" fill="#666" />
        <path d={`M1 ${y - 6}L13 ${y + 0.5}L1 ${y + 7}Z`} fill="#eee" />
        {track.automated && <circle cx="8.5" cy={y + 0.5} r="2.5" fill="#c9c9b6" stroke="#222" strokeWidth="1.3" />}
      </svg>
      <input type="range" aria-label={`${track.name} volume`} className="absolute inset-0 size-full opacity-0" />
    </span>
  )
}

function Strip({ track, label, children, indent = 'pl-1', knob = 'mt-auto' }) {
  return (
    <div className="flex min-w-0 flex-col border-r-2 border-[#303030]">
      <div className={clsx('flex h-[19px] items-center justify-between overflow-hidden border-b border-[#303030] pl-[3px] whitespace-nowrap', track.color, track.text ?? 'text-[#2b2b2b]')}>
        <span className="w-0 flex-1">{track.name}</span>
        {track.group && (
          <svg viewBox="0 0 14 14" className={clsx('mr-px size-3.5 shrink-0', track.color)}>
            <circle cx="7" cy="7" r="6.2" className="fill-none stroke-current" />
            <path d="M3.5 4.8H10.5L7 10.5Z" className="fill-current" />
          </svg>
        )}
      </div>
      <div className={clsx('flex h-80 border-b-2 border-[#303030]', indent, track.selected && 'bg-[#3b3b3b]')}>
        <div className="flex w-9 shrink-0 flex-col items-center pt-2 pb-[7px]">
          <button className="h-3.5 w-9 rounded-full border border-[#2e2e2e] bg-[#0a0a0a] leading-[12px]">{track.peak}</button>
          <Field label={`${track.name} volume value`} value={track.vol} className="mt-[5px] w-9 text-center" />
          <Knob label={`${track.name} pan`} line={track.selected} className={knob} />
          {label && (
            <>
              <button className="mt-px h-[23px] w-[23px] bg-[#c9c9b6] text-xs leading-none text-black">{label}</button>
              <Box className="mt-1 w-6">S</Box>
            </>
          )}
          {children}
        </div>
        <Fader track={track} />
        {track.scale && (
          <div className="flex flex-col pt-[7px] pl-px font-normal text-[#bbb]">
            {SCALE.map(([t, gap], i) => (
              <span key={i} className={clsx('leading-[12px]', gap)}>{t}</span>
            ))}
          </div>
        )}
      </div>
      <div className={clsx('h-1.5', track.color)} />
    </div>
  )
}

function Mixer() {
  return (
    <section className="mt-[5px] flex justify-between px-px">
      <div className="grid w-[1216px] grid-cols-[repeat(14,minmax(0,1fr))_99px] overflow-hidden rounded-t-sm">
        {TRACKS.map((t, i) => (
          <Strip key={t.name} track={t} label={i + 1} indent={t.scale ? 'pl-[7px]' : 'pl-1'}>
            <Box aria-label={`Arm ${t.name}`} tone={t.armed ? 'bg-[#c9c9b6] text-black' : 'bg-black'} className="mt-1 w-6">
              {t.midi ? (
                <svg viewBox="0 0 8 8" className="size-2">
                  <circle cx="4" cy="4" r="4" className="fill-current" />
                  <path d="M5.2 1.5V5.5M3.2 5.8H5.2" fill="none" stroke={t.armed ? '#c9c9b6' : '#000'} strokeWidth="1.3" />
                </svg>
              ) : (
                <span className="size-2 rounded-full bg-[#5a5a5a]" />
              )}
            </Box>
          </Strip>
        ))}
      </div>

      <div className="grid grid-cols-[80px_80px_88px] overflow-hidden rounded-r-sm border-l-4 border-[#303030]">
        <Strip track={{ name: 'A Reverb', color: 'bg-[#a9a9a9]', peak: '-99.8', vol: '0.2' }} label="A">
          <span className="mt-1 h-3.5" />
        </Strip>
        <Strip track={{ name: 'B Delay', color: 'bg-[#7b7b7b]', peak: '-∞', vol: '0' }} label="B">
          <span className="mt-1 h-3.5" />
        </Strip>
        <Strip track={{ name: 'Main', color: 'bg-[#3c3c3c]', text: 'text-[#ddd]', peak: '-3.26', vol: '0' }} indent="pl-3">
          <Box tone="bg-[#555] text-black" className="mt-2 w-[26px] font-normal">Solo</Box>
          <span className="relative mt-0.5 flex">
            <svg viewBox="0 0 30 30" className="size-[30px] fill-none" strokeWidth="1.8">
              <path d="M8.5 25.5A12.7 12.7 0 1 1 27.6 17.5" className="stroke-[#c9c9b6]" />
              <path d="M26.8 20A12.7 12.7 0 0 1 22 25.5" className="stroke-[#333]" />
              <path d="M12.3 28.5A3.8 3.8 0 1 1 17.7 28.5M12.8 24.5V28.5M17.2 24.5V28.5" className="stroke-[#eee]" strokeWidth="1.2" />
            </svg>
            <input type="range" aria-label="Cue volume" className="absolute inset-0 size-full opacity-0" />
          </span>
        </Strip>
      </div>
    </section>
  )
}

function SectionTitle({ icon, title, dir = 'down' }) {
  return (
    <h2 className="flex h-[19px] items-center gap-1 bg-[#3b3b3b] pr-3 pl-1.5">
      {icon}
      <span className="flex-1">{title}</span>
      <Tri dir={dir} className={dir === 'down' ? 'h-[7px] w-2' : 'h-2 w-[7px]'} />
    </h2>
  )
}

function PairHead({ htmlFor, children }) {
  return (
    <div className="flex h-3.5 items-center justify-between">
      <label htmlFor={htmlFor}>{children}</label>
      <Pill className="w-6 font-normal text-[#555]">Set</Pill>
    </div>
  )
}

function ClipPanel() {
  const id = useId()
  const line = <hr className="border-[#333]" />
  return (
    <aside className="w-[178px] shrink-0">
      <div className="flex h-[18px] items-center gap-1 bg-[#f7f47c] pr-0.5 pl-1 text-[#2b2b2b]">
        <span className="size-[9px] border border-[#555] bg-[#c9c9b6]" />
        <span className="flex-1">Vocals Patience Main</span>
        <svg viewBox="0 0 14 14" className="size-3.5">
          <circle cx="7" cy="7" r="7" fill="#111" />
          <path d="M4 4H10V10H4Z" fill="none" stroke="#777" />
          <path d="M5.5 4H8.5V6H5.5Z" fill="#777" />
        </svg>
      </div>
      <SectionTitle
        title="Clip"
        icon={<svg viewBox="0 0 10 10" className="size-2.5"><path d="M0.6 0.6H9.4V9.4H0.6Z" fill="none" stroke="#eee" strokeWidth="1.2" /><path d="M3.5 2.8L7.2 5L3.5 7.2Z" fill="#eee" /></svg>}
      />
      <div className="flex flex-col gap-1 px-2.5 py-1">
        <div className="grid grid-cols-2 gap-1">
          <PairHead htmlFor={id + 'start'}>Start</PairHead>
          <PairHead htmlFor={id + 'end'}>End</PairHead>
          <Field id={id + 'start'} value="0 :     0 .     0" className="pr-0.5 text-right" />
          <Field id={id + 'end'} value="0 :   44 . 551" className="pr-0.5 text-right" />
        </div>
        <div className="h-3.5" />
        {line}
        <Box className="gap-1 font-normal text-[#5a5a5a]"><LoopGlyph className="size-2.5" />Loop</Box>
        <div className="grid grid-cols-2 gap-1">
          <PairHead htmlFor={id + 'pos'}>Position</PairHead>
          <PairHead htmlFor={id + 'len'}>Length</PairHead>
          <Field id={id + 'pos'} value="0 :     0 .     0" className="pr-0.5 text-right" />
          <Field id={id + 'len'} value="0 :   44 . 551" className="pr-0.5 text-right" />
        </div>
        {line}
        <div className="grid grid-cols-2 gap-1">
          <label htmlFor={id + 'num'} className="h-3.5 leading-3.5">Signature</label>
          <div className="flex h-3.5 items-center gap-[3px]">
            <label htmlFor={id + 'groove'} className="flex-1">Groove</label>
            <button aria-label="Hot-swap groove" className="flex size-[13px] items-center justify-center rounded-full border border-[#333]">
              <svg viewBox="0 0 8 8" className="size-2 fill-none stroke-[#666]"><path d="M1 5V3.5L3 1.5M0 4L1 5.5L2.5 4.5M7 3V4.5L5 6.5M8 4L7 2.5L5.5 3.5" /></svg>
            </button>
            <button aria-label="Commit groove" className="flex size-[13px] items-center justify-center rounded-full border border-[#333]">
              <svg viewBox="0 0 8 8" className="size-2 fill-none stroke-[#666]"><path d="M1 4H7M4.5 1.5L7 4L4.5 6.5" /></svg>
            </button>
          </div>
          <div className="flex h-3.5 items-center justify-between">
            <Field id={id + 'num'} value="4" className="w-[35px] text-center" />
            /
            <Field label="Signature denominator" value="4" className="w-[35px] text-center" />
          </div>
          <Field id={id + 'groove'} value="None" className="pl-px" />
        </div>
        {line}
        <label htmlFor={id + 'root'} className="h-3.5 leading-3.5">Scale</label>
        <div className="flex gap-1">
          <Box aria-label="Use scale" className="w-3.5"><ScaleGlyph className="size-[11px]" /></Box>
          <Dropdown id={id + 'root'} value="C" className="w-11" />
          <Dropdown label="Scale name" value="Major" className="flex-1" />
        </div>
      </div>

      <SectionTitle
        title="Audio"
        icon={<svg viewBox="0 0 10 10" className="size-2.5 stroke-[#eee]"><path d="M0.5 3.5V6.5M3 2V8M5 0V10M7.2 2V8M9.5 3.5V6.5" /></svg>}
      />
      <div className="flex px-2.5 py-1">
        <div className="flex w-[89px] flex-col gap-1">
          <div className="grid grid-cols-2 gap-1">
            <Box>Warp</Box>
            <Box className="font-normal text-[#555]">Follow</Box>
          </div>
          <div>
            <Dropdown label="Warp mode" value="Beats" />
            <label htmlFor={id + 'preserve'} className="block h-[15px] leading-[15px]">Preserve</label>
            <Dropdown id={id + 'preserve'} value="Transients" />
          </div>
          <div className="grid grid-cols-2 gap-1">
            <Dropdown label="Transient loop mode" value="⇄" />
            <Field label="Transient envelope" value="100" className="text-center" />
          </div>
          <div className="mt-[7px]">
            <label htmlFor={id + 'bpm'} className="block h-3.5 leading-3.5">BPM</label>
            <div className="flex gap-[3px]">
              <Field id={id + 'bpm'} value="120.00" className="w-[41px] text-center" />
              <Pill className="w-[21px] font-normal text-[#666]">/2</Pill>
              <Pill className="w-[21px] font-normal text-[#666]">×2</Pill>
            </div>
          </div>
          <div className="h-[22px]" />
          {line}
          <div className="flex gap-1">
            <Pill className="w-[57px]">Reverse</Pill>
            <Pill className="w-7 font-normal text-[#666]">Edit</Pill>
          </div>
          {line}
          <div className="grid grid-cols-3 gap-0.5">
            <Box tone="bg-[#555] text-black" className="font-normal">Fade</Box>
            <Box>RAM</Box>
            <Box>HiQ</Box>
          </div>
        </div>
        <div className="mx-[7px] w-0.5 bg-[#222]" />
        <div className="flex w-[53px] flex-col items-center">
          <label htmlFor={id + 'gain'} className="h-3.5 leading-3.5">Gain</label>
          <div className="relative flex h-[93px] w-full">
            <svg viewBox="0 0 30 93" className="h-[93px] w-[30px] fill-[#eee]">
              {[4, 28, 40, 60, 66, 74, 86].map((y) => (
                <rect key={y} x="20" y={y} width="3" height="1" />
              ))}
              <path d="M13 46L24 53L13 60Z" />
            </svg>
            <div className="flex flex-col">
              <span className="leading-[8px]">24</span>
              <span className="mt-[41px] leading-[8px]">0</span>
              <span className="mt-[25px] leading-[8px]">70</span>
            </div>
            <input id={id + 'gain'} type="range" className="absolute inset-0 size-full opacity-0" />
          </div>
          <span className="h-3.5 leading-3.5">0.0 dB</span>
          <label htmlFor={id + 'pitch'} className="mt-1.5 h-3.5 leading-3.5">Pitch</label>
          <span className="relative flex flex-col items-center">
            <svg viewBox="0 0 30 26" className="h-[26px] w-[30px] fill-none stroke-[#333]" strokeWidth="1.8">
              <path d="M12.3 1.5A12.7 12.7 0 0 0 9 25.4M17.7 1.5A12.7 12.7 0 0 1 21 25.4" />
            </svg>
            <input id={id + 'pitch'} type="range" className="absolute inset-0 size-full opacity-0" />
          </span>
          <span className="-mt-1 h-3 leading-3">st</span>
          <div className="mt-auto flex w-full">
            <Field label="Semitones" value="0" className="w-1/2 border-r-0 text-center" />
            <Field label="Cents" value="0" className="w-1/2 border-l-0 text-center" />
          </div>
        </div>
      </div>
      <SectionTitle
        title="Transform"
        dir="left"
        icon={<svg viewBox="0 0 10 10" className="size-2.5 fill-[#eee]"><circle cx="3.5" cy="3.5" r="3" /><circle cx="3" cy="8" r="1" /><circle cx="8" cy="3" r="1" /><circle cx="9" cy="6" r="0.9" /><circle cx="6" cy="9" r="1" /></svg>}
      />
      <hr className="mt-px border-[#333]" />
    </aside>
  )
}

function SampleEditor() {
  return (
    <div className="flex min-w-0 flex-1 flex-col">
      <div className="grid h-[19px] grid-cols-[1fr_auto_1fr] items-center pb-px">
        <div className="flex items-center gap-1 pl-[3px]">
          <span className="flex h-3 w-4 items-center justify-center border border-[#555]">
            <svg viewBox="0 0 11 7" className="h-[7px] w-[11px] stroke-[#888]"><path d="M0 3.5H1.5M3.5 2V5M5.5 0V7M7.5 2V5M9.5 3.5H11" strokeWidth="0.9" /></svg>
          </span>
          <span>Vocal Patience Main.wav&nbsp; 48.0 kHz · 24-Bit · 2 Ch</span>
        </div>
        <button className="h-[18px] w-16 bg-[#3b3b3b]">Sample</button>
      </div>
      <div className="flex h-3 items-center justify-between border-y border-[#c9c9b6]">
        <svg viewBox="0 0 8 10" className="h-2.5 w-2 fill-none stroke-[#c9c9b6]"><path d="M0.5 0.5L7 5L0.5 9.5" /></svg>
        <svg viewBox="0 0 8 10" className="h-2.5 w-2 fill-none stroke-[#c9c9b6]"><path d="M7.5 0.5L1 5L7.5 9.5" /></svg>
      </div>
      <div className="flex h-[13px] items-start justify-between border-b border-[#222] pt-px text-[#f7f47c]">
        <Tri dir="right" className="h-[9px] w-2" />
        <Tri dir="left" className="h-[9px] w-2" />
      </div>
      <div className="flex h-[17px] items-end border-b border-[#333] bg-[#050505] pb-1">
        <Tri className="h-1 w-[3px] text-[#c9c9b6]" />
      </div>
      <div className="flex flex-1 flex-col border-l border-[#c9c9b6]">
        <Waveform />
        <Waveform />
      </div>
      <div className="mb-[18px] flex h-[17px] overflow-hidden border-b border-[#333] pl-px">
        {CLIP_MARKS.map((s) => {
          const span = Math.min(2, CLIP_SECONDS - s)
          return (
            <div key={s} className="relative flex w-0 min-w-0 basis-0 items-start" style={{ flexGrow: span }}>
              <span className="h-2.5 w-[3px] shrink-0 border-b border-l border-[#555]" />
              <span className="pt-1 leading-3 font-normal text-[#aaa]">0:{String(s).padStart(2, '0')}</span>
              {[0.5, 1, 1.5].filter((m) => m < span).map((m) => (
                <span key={m} className="absolute top-0 h-1 w-px bg-[#555]" style={{ left: `${(m / span) * 100}%` }} />
              ))}
            </div>
          )
        })}
      </div>
    </div>
  )
}

function ClipView() {
  return (
    <section className="mt-[7px] flex flex-1 overflow-hidden rounded-md border-2 border-[#666]">
      <ClipPanel />
      <div className="mr-px flex w-4 shrink-0 justify-center border-x-2 border-[#222] py-0.5">
        <span className="w-2 rounded-full bg-[#444]" />
      </div>
      <SampleEditor />
    </section>
  )
}

function DeviceThumbs() {
  return (
    <svg viewBox="0 0 104 22" className="h-[22px] w-[104px]">
      <path d="M1 1H14M18 1H30M33 1H85M89 1H102" stroke="#888" strokeDasharray="1 2" />
      <path d="M0.5 2V20H13.5V2M17.5 2V20H30.5V2M33 3H53V20H33ZM55 3H86V20H55ZM89.5 2V20H103V2" fill="none" stroke="#222" />
      <path d="M2 3H13V6H2ZM91 3H102V6H91Z" fill="#c4d87c" />
      <path d="M19 3H23V6H19ZM19 12H23V15H19Z" fill="#9aa3dc" />
      <path d="M25 3H30V6H25ZM25 12H30V15H25Z" fill="#a9dbe6" />
      <path d="M6 10V13H9M20 8H23M25 8H29M20 17H22M25 18H28M95 10Q98 11 96 14M35 6H40M42 9H48M36 14H41M44 17H51M57 6H66M58 13H64M67 16H75M77 7V18M81 6V18M69 10H75M35 18H39" fill="none" stroke="#777" strokeDasharray="2 1" />
      <path d="M75 4H82M48 7H51" stroke="#8a6d2a" />
      <path d="M62 18H70" stroke="#ccc" />
    </svg>
  )
}

function StatusBar() {
  return (
    <footer className="flex h-[38px] items-center">
      <svg viewBox="0 0 16 16" className="ml-[3px] size-4">
        <circle cx="8" cy="8" r="8" fill="#333" />
        <path d="M7 3.5H9V5.5H7ZM7 6.5H9V12.5H7Z" fill="#000" />
      </svg>
      <span className="flex-1" />
      <button aria-label="Show clip view" className="flex h-5 w-[21px] items-center justify-center rounded-sm bg-[#c9c9b6] text-black">
        <Tri dir="up" className="h-1.5 w-2" />
      </button>
      <button aria-label="Clip overview" className="ml-px flex h-6 w-[210px] flex-col rounded-md border-2 border-[#777] px-0.5 py-px">
        <Waveform view="0 -420 4596 840" />
        <Waveform view="0 -420 4596 840" />
      </button>
      <Tri dir="right" className="ml-4 h-2 w-[7px]" />
      <span className="ml-1.5 h-5 w-px bg-[#444]" />
      <span className="mr-1.5 ml-1.5">Vocal Main</span>
      <DeviceThumbs />
      <svg viewBox="0 0 16 14" className="ml-[18px] h-3.5 w-4 fill-[#c9c9b6]">
        <path d="M0 4H2V14H0ZM4.5 0H6.5V14H4.5ZM9 5H11V14H9ZM13.5 2H15.5V14H13.5Z" />
      </svg>
      <Tri className="mr-[5px] ml-1.5 h-[5px] w-[7px] text-[#444]" />
    </footer>
  )
}

export default function App() {
  return (
    <main className="relative flex min-h-screen flex-col bg-black px-2 font-[family-name:Inter,sans-serif] text-[11px] leading-4 font-medium text-[#eee]">
      <TopBar />
      <Overview />
      <section className="mt-1.5 flex">
        <Timeline />
        <LaneHeaders />
      </section>
      <Mixer />
      <ClipView />
      <StatusBar />
    </main>
  )
}
